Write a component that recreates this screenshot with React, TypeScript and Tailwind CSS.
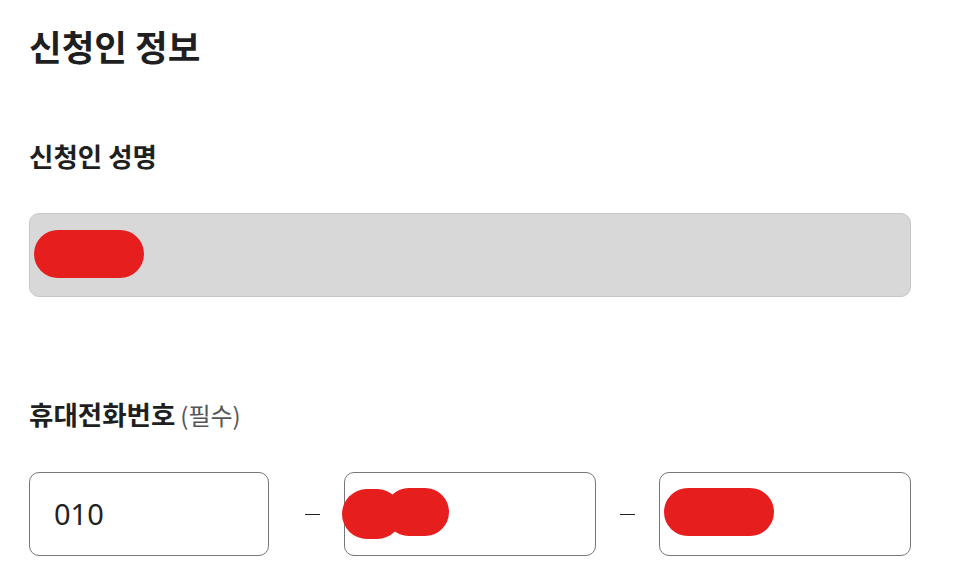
const font = "font-['Noto_Sans_CJK_KR','Noto_Sans',sans-serif]";

const Blob = ({ className }: { className: string }) => (
  <span className={`absolute rounded-full bg-[#e61e1e] ${className}`} />
);

export default function App() {
  return (
    <div className={`${font} bg-white w-[980px] h-[570px] overflow-hidden pl-[29px] pt-[22px] text-[#1f1f1f]`}>
      <div className="w-[882px]">
        <h1 className="text-[35.5px] font-bold leading-[48px]">신청인 정보</h1>

        <h2 className="mt-[69px] text-[26.5px] font-bold leading-[34px]">신청인 성명</h2>
        <div className="relative mt-[40px] h-[84px] rounded-[10px] border border-[#c6c6c6] bg-[#d8d8d8]">
          <Blob className="left-[4px] top-[16px] w-[110px] h-[48px]" />
        </div>

        <h2 className="mt-[100px] text-[26.5px] font-bold leading-[34px] flex items-baseline gap-[5px]">
          휴대전화번호
          <span className="text-[24px] font-normal text-[#555]">(필수)</span>
        </h2>

        <div className="mt-[40px] flex items-center">
          <div className="w-[240px] h-[84px] rounded-[10px] border border-[#777] flex items-center pl-[24px]">
            <span className="text-[29px] text-[#222] font-['Noto_Sans',sans-serif]">010</span>
          </div>
          <span className="w-[75px] flex justify-center"><span className="block w-[15px] h-px bg-[#222] ml-[12px]" /></span>
          <div className="relative w-[252px] h-[84px] rounded-[10px] border border-[#777]">
            <Blob className="left-[-3px] top-[16px] w-[60px] h-[50px]" />
            <Blob className="left-[40px] top-[15px] w-[64px] h-[48px]" />
          </div>
          <span className="w-[63px] flex justify-center"><span className="block w-[15px] h-px bg-[#222]" /></span>
          <div className="relative w-[252px] h-[84px] rounded-[10px] border border-[#777]">
            <Blob className="left-[4px] top-[15px] w-[110px] h-[48px]" />
          </div>
        </div>
      </div>
    </div>
  );
}
